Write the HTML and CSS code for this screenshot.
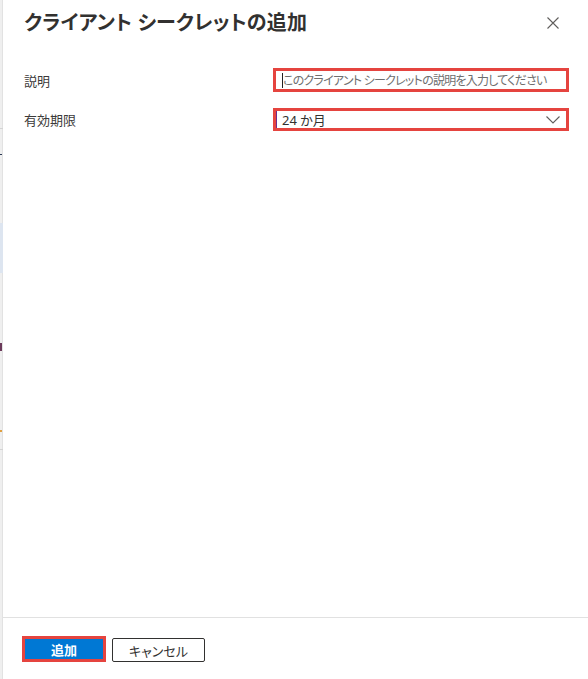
FILE: index.html
```html
<!DOCTYPE html>
<html lang="ja">
<head>
<meta charset="utf-8">
<title>クライアント シークレットの追加</title>
<link rel="stylesheet" href="styles.css">
</head>
<body>
<div class="page">
  <div class="behind">
    <span class="b-line b-line1"></span>
    <span class="b-dash"></span>
    <span class="b-sel"></span>
    <span class="b-glyph"></span>
    <span class="b-dot"></span>
    <span class="b-line b-line2"></span>
  </div>
  <div class="panel">
    <div class="header">
      <h1 class="title">クライアント シークレットの追加</h1>
      <button class="close" aria-label="閉じる">
        <svg width="12" height="12" viewBox="0 0 12 12"><path d="M0.5 0.5 L11.5 11.5 M11.5 0.5 L0.5 11.5" stroke="#605e5c" stroke-width="1.1" fill="none"/></svg>
      </button>
    </div>
    <div class="body">
      <div class="row">
        <label class="label">説明</label>
        <div class="field input">
          <span class="caret"></span>
          <span class="placeholder">このクライアント シークレットの説明を入力してください</span>
        </div>
      </div>
      <div class="row">
        <label class="label">有効期限</label>
        <div class="field select">
          <span class="value">24 か月</span>
          <svg class="chev" width="14" height="8" viewBox="0 0 14 8"><path d="M0.5 0.5 L7 7 L13.5 0.5" stroke="#605e5c" stroke-width="1.1" fill="none"/></svg>
        </div>
      </div>
    </div>
    <div class="footer">
      <button class="btn primary">追加</button>
      <button class="btn secondary">キャンセル</button>
    </div>
  </div>
</div>
</body>
</html>
```
FILE: styles.css
```css
* { box-sizing: border-box; }
html, body { margin: 0; padding: 0; }
body {
  width: 588px;
  height: 679px;
  overflow: hidden;
  background: #fff;
  font-family: "Noto Sans", "Noto Sans CJK JP", sans-serif;
  color: #323130;
  font-feature-settings: "palt";
}
.page {
  display: flex;
  height: 679px;
}
.behind {
  position: relative;
  width: 3px;
  flex: none;
  background: #efefef;
  box-shadow: inset -1px 0 0 #e2e2e2;
}
.behind span { position: absolute; left: 0; display: block; }
.b-line { width: 3px; height: 1px; background: #d4d4d4; }
.b-line1 { top: 128px; }
.b-line2 { top: 449px; }
.b-dash { top: 154px; width: 2px; height: 1px; background: #2b3a55; }
.b-sel { top: 223px; width: 3px; height: 50px; background: #dde5f0; }
.b-glyph { top: 343px; width: 2px; height: 8px; background: #6b3a5a; }
.b-dot { top: 430px; width: 2px; height: 2px; background: #e0a040; }

.panel {
  flex: 1;
  display: flex;
  flex-direction: column;
  background: #fff;
}
.header {
  display: flex;
  align-items: center;
  justify-content: space-between;
  height: 46px;
  padding: 0 29px 0 21px;
}
.title {
  margin: 0;
  font-size: 20px;
  font-weight: 600;
  line-height: 28px;
  color: #323130;
  letter-spacing: 0.2px;
}
.close {
  border: 0;
  background: none;
  padding: 0;
  width: 12px;
  height: 12px;
  display: flex;
}
.body {
  flex: 1;
  padding: 22px 19px 0 21px;
  display: flex;
  flex-direction: column;
  gap: 16px;
}
.row {
  display: grid;
  grid-template-columns: 249px 296px;
  align-items: center;
}
.label {
  font-size: 13px;
  color: #3b3a39;
}
.field {
  height: 24px;
  border: 3px solid #e5443f;
  display: flex;
  align-items: center;
  padding-left: 6px;
  font-size: 13px;
}
.caret {
  width: 1px;
  height: 15px;
  background: #222;
  flex: none;
}
.placeholder {
  color: #6e6e6e;
  font-size: 12px;
  white-space: nowrap;
  letter-spacing: -0.75px;
}
.select {
  height: 23px;
  justify-content: space-between;
  padding-right: 6px;
  box-shadow: inset 1px 0 0 #6b2d8f;
}
.value {
  color: #323130;
}
.chev { display: block; }
.footer {
  height: 62px;
  border-top: 1px solid #e1e1e1;
  display: flex;
  align-items: flex-start;
  gap: 6px;
  padding: 18px 0 0 19px;
}
.btn {
  font-family: "Noto Sans", "Noto Sans CJK JP", sans-serif;
  font-feature-settings: "palt";
  font-size: 13px;
  cursor: pointer;
  padding: 0;
  display: flex;
  align-items: center;
  justify-content: center;
}
.primary {
  width: 84px;
  height: 26px;
  background: #0078d4;
  color: #fff;
  font-weight: 700;
  border: 3px solid #e5443f;
}
.secondary {
  margin-top: 2px;
  width: 93px;
  height: 24px;
  background: #fff;
  color: #323130;
  border: 1px solid #323130;
  border-radius: 2px;
}
```
